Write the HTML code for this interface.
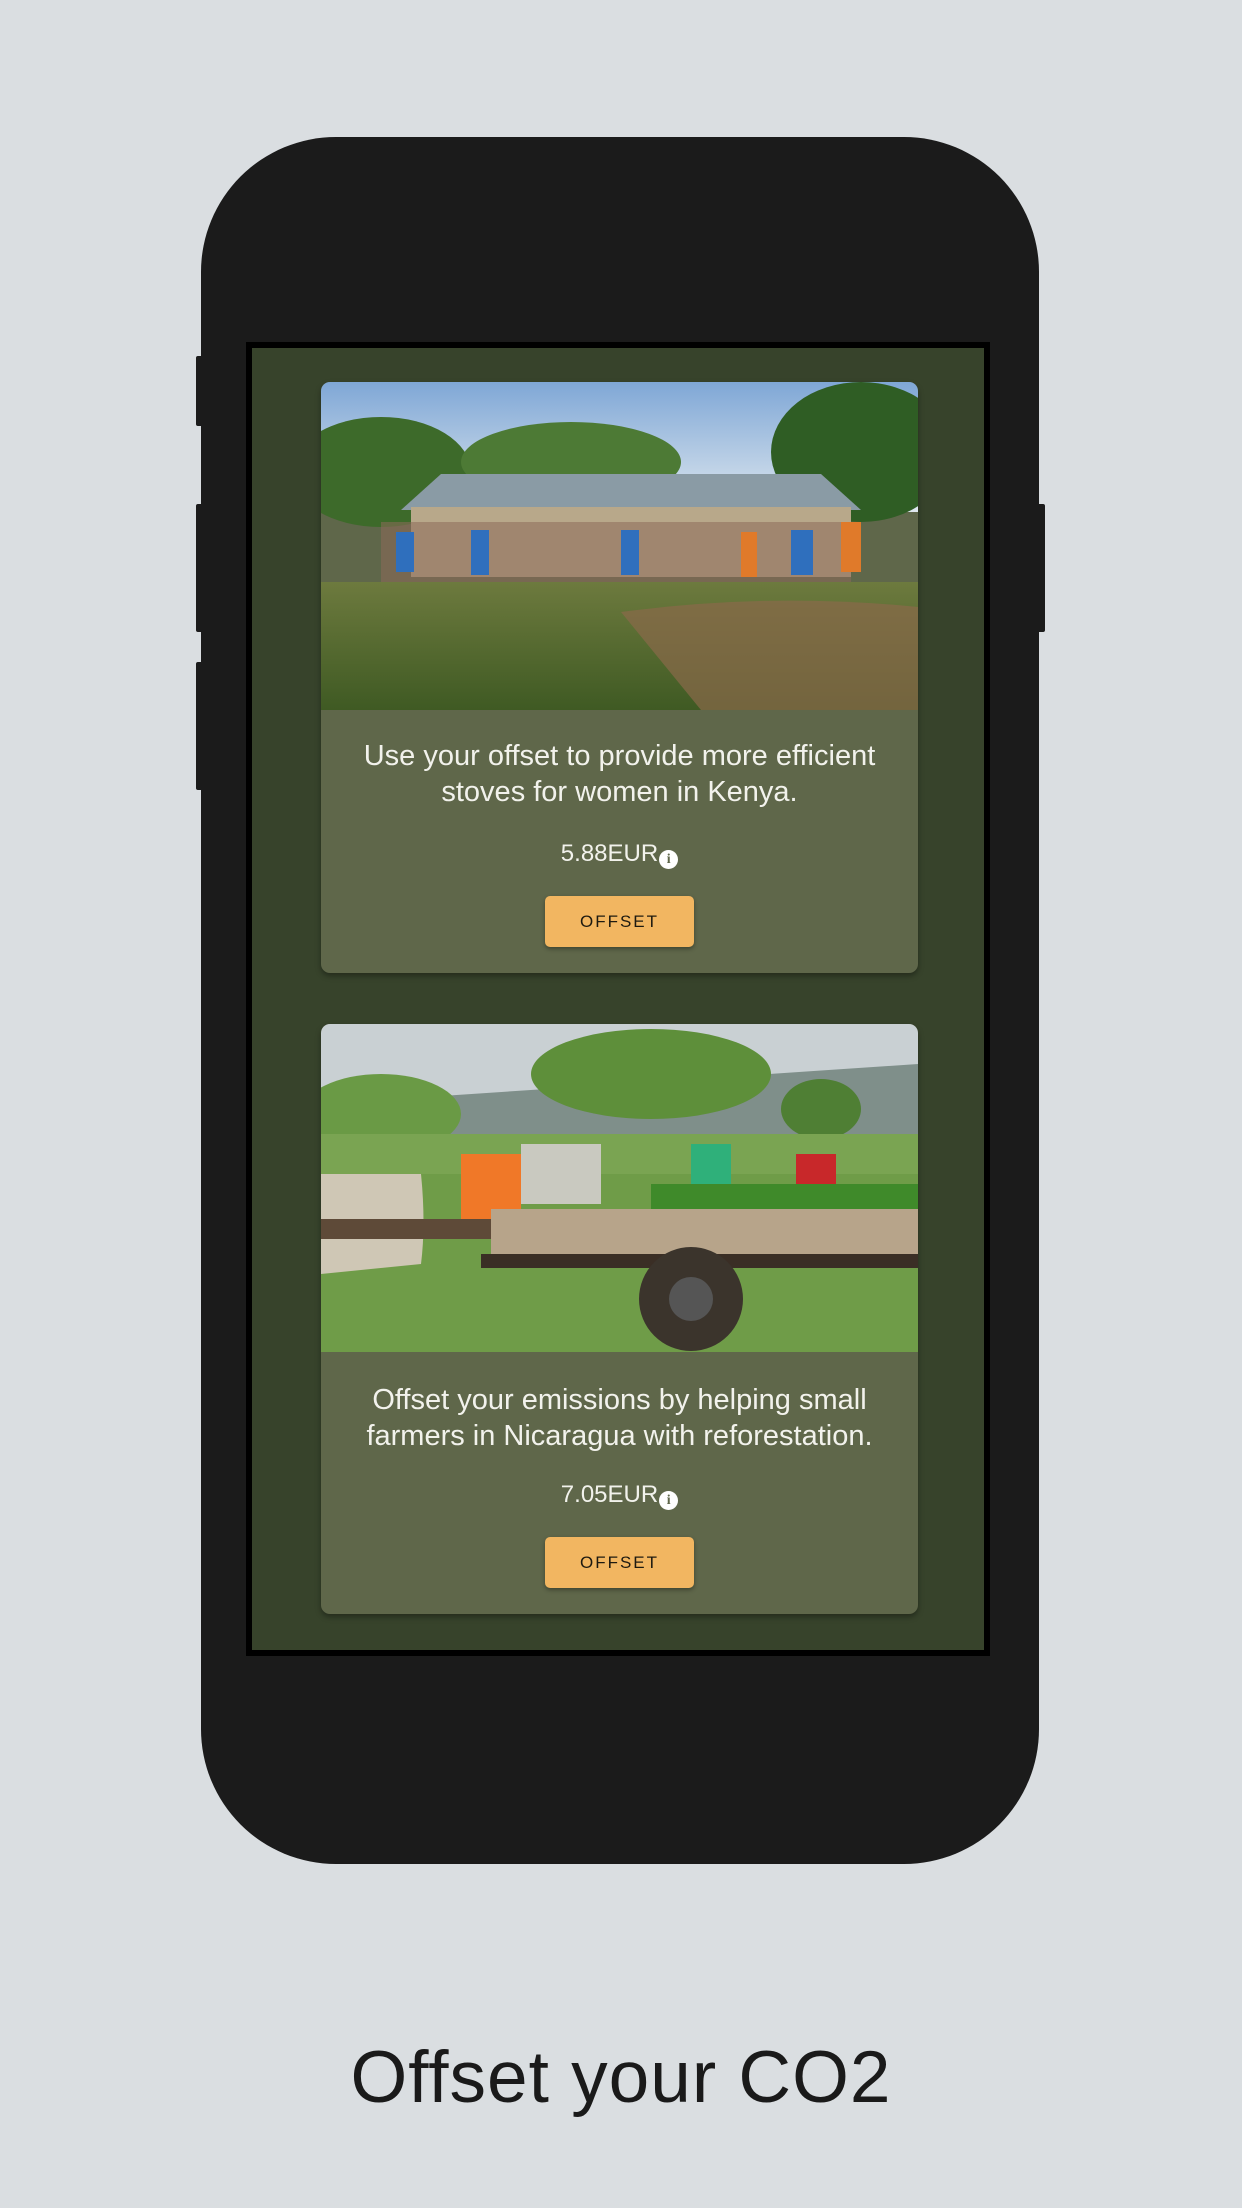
<!DOCTYPE html>
<html><head><meta charset="utf-8"><style>
html,body{margin:0;padding:0}
body{width:1242px;height:2208px;background:#dadee1;position:relative;overflow:hidden;font-family:"Liberation Sans",sans-serif}
.phone{position:absolute;left:201px;top:137px;width:838px;height:1727px;background:#1b1b1b;border-radius:135px}
.btn{position:absolute;background:#1b1b1b;border-radius:2px}
.screen{position:absolute;left:246px;top:342px;width:744px;height:1314px;background:#000}
.inner{position:absolute;left:6px;top:6px;right:6px;bottom:6px;background:#37432b}
.card{position:absolute;left:69px;width:597px;background:#5f674a;border-radius:9px;overflow:hidden;box-shadow:0 3px 6px rgba(0,0,0,.35)}
.card svg{display:block}
.txt{color:#f2f2ec;text-align:center;font-size:29px;line-height:36px;margin-top:28px;white-space:nowrap}
.price{color:#f2f2ec;text-align:center;font-size:24px;margin-top:29px;height:30px;line-height:30px}
.i{display:inline-block;width:19px;height:19px;border-radius:50%;background:#fff;color:#5f674a;font-size:14px;line-height:19px;font-weight:bold;vertical-align:-2px;text-align:center;font-family:"Liberation Serif",serif;margin-left:1px}
.ob{display:block;margin:27px auto 0;width:149px;height:51px;background:#f2b661;border-radius:5px;box-shadow:0 2px 4px rgba(0,0,0,.35);text-align:center;line-height:51px;font-size:17px;letter-spacing:2px;color:#1e1a10}
.cap{position:absolute;left:0;width:1242px;top:2036px;text-align:center;font-size:73px;color:#1a1a1a;font-weight:300;letter-spacing:1px}
</style></head><body>
<div class="btn" style="left:196px;top:356px;width:10px;height:70px"></div>
<div class="btn" style="left:196px;top:504px;width:10px;height:128px"></div>
<div class="btn" style="left:196px;top:662px;width:10px;height:128px"></div>
<div class="btn" style="left:1033px;top:504px;width:12px;height:128px"></div>
<div class="phone"></div>
<div class="screen"><div class="inner">
<div class="card" style="top:34px;height:591px">
<svg width="597" height="328" viewBox="0 0 597 328">
<defs><linearGradient id="s1" x1="0" y1="0" x2="0" y2="1"><stop offset="0" stop-color="#7fa7d6"/><stop offset="1" stop-color="#dfe8ef"/></linearGradient>
<linearGradient id="g1" x1="0" y1="0" x2="0" y2="1"><stop offset="0" stop-color="#6d7a3e"/><stop offset="1" stop-color="#3f5a23"/></linearGradient></defs>
<rect width="597" height="130" fill="url(#s1)"/>
<ellipse cx="60" cy="90" rx="90" ry="55" fill="#3d6a2a"/>
<ellipse cx="250" cy="80" rx="110" ry="40" fill="#4d7a35"/>
<ellipse cx="540" cy="70" rx="90" ry="70" fill="#2f5d24"/>
<polygon points="80,128 120,92 500,92 540,128" fill="#8a9ba5"/>
<rect x="90" y="125" width="440" height="70" fill="#b8a88a"/>
<rect x="60" y="140" width="470" height="70" fill="#8c6a5a" opacity=".55"/>
<g fill="#2f6fbd"><rect x="75" y="150" width="18" height="40"/><rect x="150" y="148" width="18" height="45"/><rect x="300" y="148" width="18" height="45"/><rect x="470" y="148" width="22" height="45"/></g>
<g fill="#e07a2a"><rect x="520" y="140" width="20" height="50"/><rect x="420" y="150" width="16" height="45"/></g>
<rect y="200" width="597" height="128" fill="url(#g1)"/>
<path d="M300 230 Q450 210 597 225 L597 328 L380 328 Z" fill="#8a6a4a" opacity=".7"/>
</svg>
<div class="txt">Use your offset to provide more efficient<br>stoves for women in Kenya.</div>
<div class="price">5.88EUR<span class="i">i</span></div>
<div class="ob">OFFSET</div>
</div>
<div class="card" style="top:676px;height:590px">
<svg width="597" height="328" viewBox="0 0 597 328">
<rect width="597" height="110" fill="#c9d0d3"/>
<path d="M0 80 Q300 60 597 40 L597 120 L0 120Z" fill="#7f8f8a"/>
<ellipse cx="330" cy="50" rx="120" ry="45" fill="#5e8f3a"/>
<ellipse cx="60" cy="90" rx="80" ry="40" fill="#6a9a45"/>
<ellipse cx="500" cy="85" rx="40" ry="30" fill="#4f7f34"/>
<rect y="110" width="597" height="218" fill="#7aa452"/>
<rect y="150" width="597" height="178" fill="#6f9c48"/>
<g><rect x="140" y="130" width="60" height="70" fill="#f07828"/><rect x="370" y="120" width="40" height="70" fill="#2fb07a"/><rect x="475" y="130" width="40" height="70" fill="#c8282a"/><rect x="200" y="120" width="80" height="60" fill="#c9c9c0"/></g>
<path d="M0 150 L100 150 Q105 200 100 240 L0 250Z" fill="#cfc7b5"/>
<rect x="0" y="195" width="170" height="20" fill="#5e4a38"/>
<rect x="330" y="160" width="267" height="30" fill="#3f8a2a"/>
<rect x="170" y="185" width="427" height="50" fill="#b7a48a"/>
<rect x="160" y="230" width="437" height="14" fill="#3a2e25"/>
<circle cx="370" cy="275" r="52" fill="#3b342c"/><circle cx="370" cy="275" r="22" fill="#555"/>
</svg>
<div class="txt" style="margin-top:30px">Offset your emissions by helping small<br>farmers in Nicaragua with reforestation.</div>
<div class="price" style="margin-top:26px">7.05EUR<span class="i">i</span></div>
<div class="ob">OFFSET</div>
</div>
</div></div>
<div class="cap">Offset your CO2</div>
</body></html>
